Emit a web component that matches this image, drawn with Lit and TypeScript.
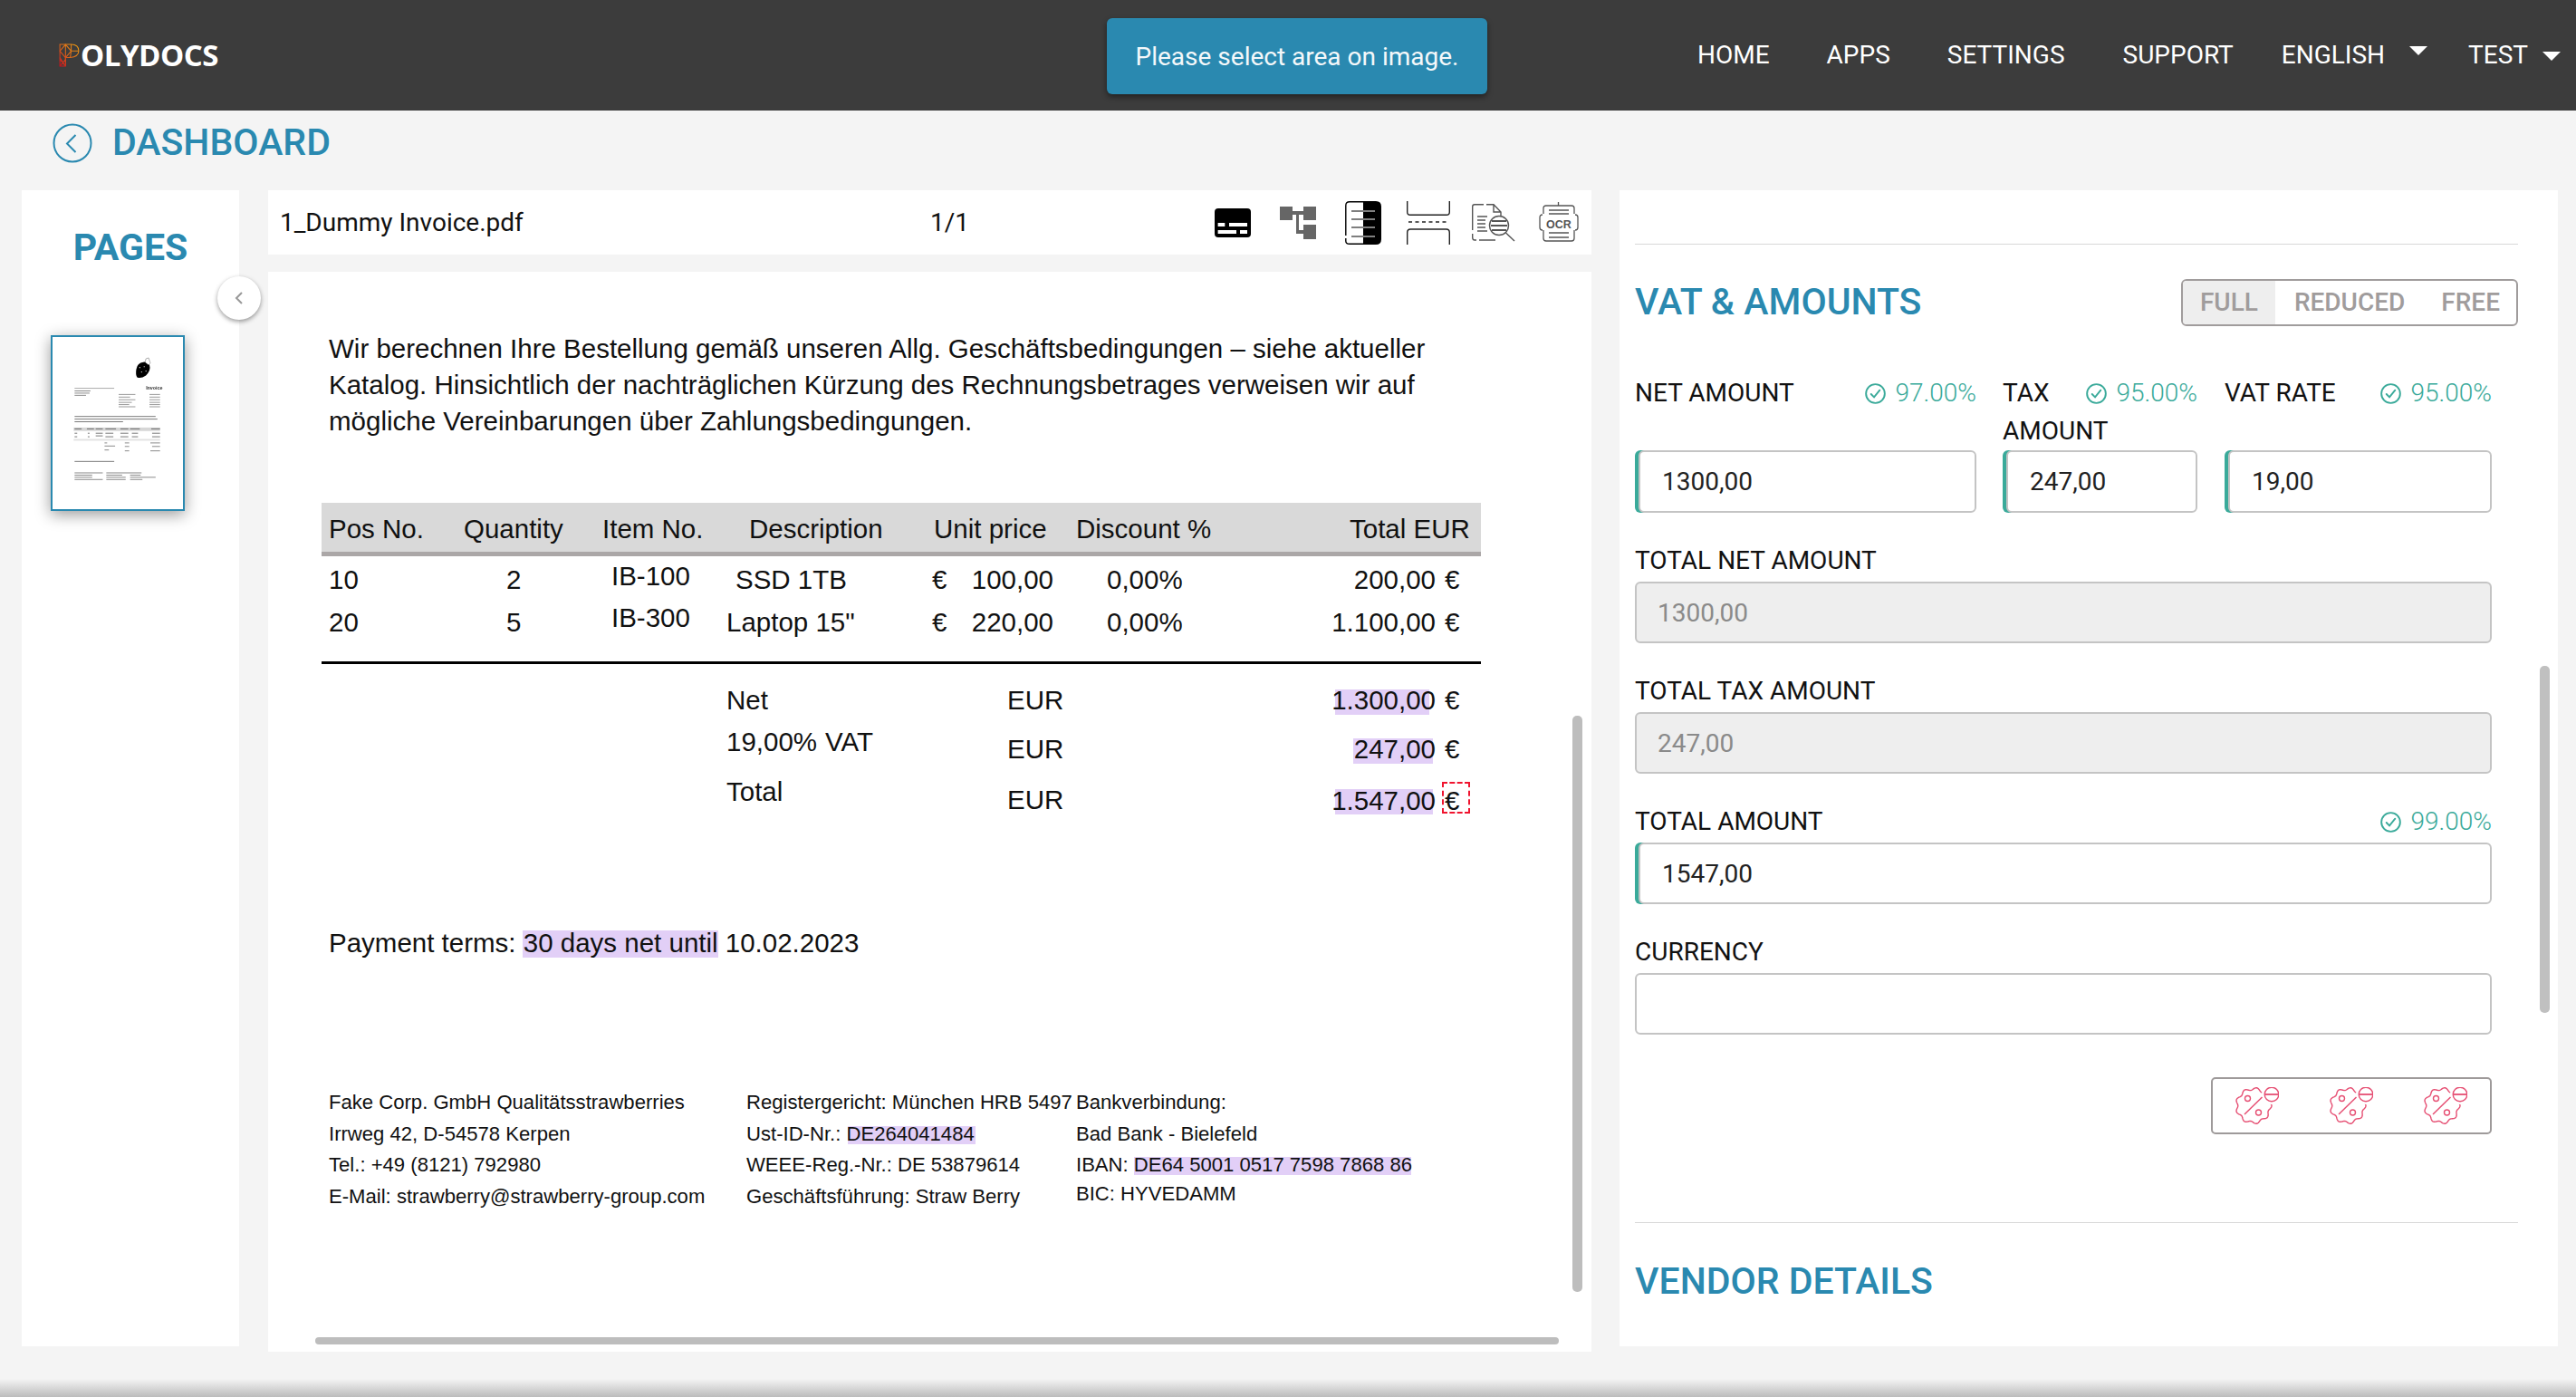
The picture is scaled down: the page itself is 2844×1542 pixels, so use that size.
import { LitElement, css, html, svg, type TemplateResult } from 'lit';
import { customElement } from 'lit/decorators.js';

// text layer of the rendered pdf page, screen coords (y = centre of the line)
interface PdfText { t: string; x?: number; r?: number; y: number; fs?: number; }

const ORIGIN_X = 296;
const ORIGIN_Y = 300;
const DOC_W = 1461;
const SMALL = 22.1;
const AMOUNT_R = 1585;
const EURO_X = 1595;

const PDF_TEXT: PdfText[] = [
  { t: 'Wir berechnen Ihre Bestellung gemäß unseren Allg. Geschäftsbedingungen – siehe aktueller', x: 363, y: 385 },
  { t: 'Katalog. Hinsichtlich der nachträglichen Kürzung des Rechnungsbetrages verweisen wir auf', x: 363, y: 425 },
  { t: 'mögliche Vereinbarungen über Zahlungsbedingungen.', x: 363, y: 465 },
  { t: 'Pos No.', x: 363, y: 584 },
  { t: 'Quantity', x: 512, y: 584 },
  { t: 'Item No.', x: 665, y: 584 },
  { t: 'Description', x: 827, y: 584 },
  { t: 'Unit price', x: 1031, y: 584 },
  { t: 'Discount %', x: 1188, y: 584 },
  { t: 'Total EUR', x: 1490, y: 584 },
  { t: '10', x: 363, y: 640 },
  { t: '2', x: 559, y: 640 },
  { t: 'IB-100', x: 675, y: 636 },
  { t: 'SSD 1TB', x: 812, y: 640 },
  { t: '€', x: 1029, y: 640 },
  { t: '100,00', r: 1163, y: 640 },
  { t: '0,00%', x: 1222, y: 640 },
  { t: '200,00', r: AMOUNT_R, y: 640 },
  { t: '€', x: EURO_X, y: 640 },
  { t: '20', x: 363, y: 687 },
  { t: '5', x: 559, y: 687 },
  { t: 'IB-300', x: 675, y: 682 },
  { t: 'Laptop 15"', x: 802, y: 687 },
  { t: '€', x: 1029, y: 687 },
  { t: '220,00', r: 1163, y: 687 },
  { t: '0,00%', x: 1222, y: 687 },
  { t: '1.100,00', r: AMOUNT_R, y: 687 },
  { t: '€', x: EURO_X, y: 687 },
  { t: 'Net', x: 802, y: 773 },
  { t: 'EUR', x: 1112, y: 773 },
  { t: '1.300,00', r: AMOUNT_R, y: 773 },
  { t: '€', x: EURO_X, y: 773 },
  { t: '19,00%', x: 802, y: 819 },
  { t: 'VAT', x: 911, y: 819 },
  { t: 'EUR', x: 1112, y: 827 },
  { t: '247,00', r: AMOUNT_R, y: 827 },
  { t: '€', x: EURO_X, y: 827 },
  { t: 'Total', x: 802, y: 874 },
  { t: 'EUR', x: 1112, y: 883 },
  { t: '1.547,00', r: AMOUNT_R, y: 884 },
  { t: '€', x: EURO_X, y: 884 },
  { t: 'Payment terms: 30 days net until 10.02.2023', x: 363, y: 1041 },
  { t: 'Fake Corp. GmbH Qualitätsstrawberries', x: 363, y: 1217, fs: SMALL },
  { t: 'Irrweg 42, D-54578 Kerpen', x: 363, y: 1252, fs: SMALL },
  { t: 'Tel.: +49 (8121) 792980', x: 363, y: 1286, fs: SMALL },
  { t: 'E-Mail: strawberry@strawberry-group.com', x: 363, y: 1321, fs: SMALL },
  { t: 'Registergericht: München HRB 5497', x: 824, y: 1217, fs: SMALL },
  { t: 'Ust-ID-Nr.: DE264041484', x: 824, y: 1252, fs: SMALL },
  { t: 'WEEE-Reg.-Nr.: DE 53879614', x: 824, y: 1286, fs: SMALL },
  { t: 'Geschäftsführung: Straw Berry', x: 824, y: 1321, fs: SMALL },
  { t: 'Bankverbindung:', x: 1188, y: 1217, fs: SMALL },
  { t: 'Bad Bank - Bielefeld', x: 1188, y: 1252, fs: SMALL },
  { t: 'IBAN: DE64 5001 0517 7598 7868 86', x: 1188, y: 1286, fs: SMALL },
  { t: 'BIC: HYVEDAMM', x: 1188, y: 1318, fs: SMALL },
];

// [x1, y1, x2, y2]
const HIGHLIGHTS = [
  [1474, 761, 1578, 789],
  [1494, 815, 1582, 843],
  [1474, 871, 1582, 899],
  [577, 1027, 793, 1057],
  [936, 1243, 1077, 1263],
  [1252, 1277, 1558, 1297],
];

// thumbnail: x, y, w, shade
const THUMB_LINES: [number, number, number, string][] = [
  [25, 57, 45, '#aaa'], [25, 60, 18, '#888'], [25, 62.5, 17, '#888'], [25, 65, 13, '#888'],
  [75, 64, 19, '#999'], [75, 67, 13, '#999'], [75, 70, 19, '#999'], [75, 73, 15, '#999'], [75, 75.5, 12, '#999'], [75, 78, 19, '#999'],
  [110, 64, 12, '#999'], [110, 67, 12, '#999'], [110, 70, 12, '#999'], [110, 73, 12, '#999'], [110, 75.5, 12, '#999'], [110, 78, 12, '#999'],
  [25, 89, 92, '#777'], [25, 92, 94, '#777'], [25, 95, 55, '#777'],
  [25, 103, 8, '#666'], [39, 103, 8, '#666'], [49, 103, 8, '#666'], [60, 103, 12, '#666'], [77, 103, 9, '#666'], [88, 103, 11, '#666'], [112, 103, 10, '#666'],
  [25, 108, 3, '#777'], [40, 108, 2, '#777'], [49, 108, 8, '#777'], [60, 108, 9, '#777'], [77, 108, 9, '#777'], [90, 108, 7, '#777'], [113, 108, 9, '#777'],
  [25, 112, 3, '#777'], [40, 112, 2, '#777'], [49, 111, 8, '#777'], [60, 112, 9, '#777'], [77, 112, 9, '#777'], [90, 112, 7, '#777'], [113, 112, 9, '#777'],
  [59, 119, 3, '#888'], [82, 119, 5, '#888'], [111, 119, 11, '#888'],
  [59, 122.5, 12, '#888'], [82, 123, 5, '#888'], [113, 123, 9, '#888'],
  [59, 127, 5, '#888'], [82, 128, 5, '#888'], [111, 128, 11, '#888'],
  [25, 140, 45, '#777'],
  [25, 153, 32, '#888'], [25, 155.5, 20, '#888'], [25, 158, 20, '#888'], [25, 160.5, 32, '#888'],
  [61, 153, 40, '#888'], [61, 155.5, 18, '#888'], [61, 158, 22, '#888'], [61, 160.5, 22, '#888'],
  [88, 155.5, 12, '#888'], [88, 158, 29, '#888'], [88, 160.5, 14, '#888'],
];

// scalloped seal behind the percent sign
const sealPath = (cx: number, cy: number, r: number, lobes: number, amp: number): string => {
  const pts: string[] = [];
  for (let i = 0; i < 180; i++) {
    const a = (i / 180) * Math.PI * 2;
    const rr = r + amp * Math.cos(a * lobes);
    pts.push(`${(cx + rr * Math.cos(a)).toFixed(2)} ${(cy + rr * Math.sin(a)).toFixed(2)}`);
  }
  return `M${pts.join('L')}Z`;
};

const percentIcon = (): TemplateResult => html`
  <svg class="pct" viewBox="0 0 48 41" fill="none" stroke="#e64f73" stroke-width="1.4">
    <path d=${sealPath(20, 20.5, 18.6, 9, 1.4)}></path>
    <circle cx="40" cy="8" r="11" fill="#fff" stroke="none"></circle>
    <circle cx="40" cy="8" r="7.8"></circle>
    <path d="M33 8H47" stroke-width="1.8"></path>
    <path d="M10 30L29.500 11" stroke-width="1.5"></path>
    <circle cx="13.500" cy="12.500" r="3"></circle>
    <circle cx="25.500" cy="28" r="3"></circle>
  </svg>
`;

const checkIcon = (): TemplateResult => html`
  <svg class="chk" viewBox="0 0 24 24" fill="none" stroke="#3aaa9a" stroke-width="2">
    <circle cx="12" cy="12" r="10.800"></circle>
    <path d="M7 12.500l3.500 3.500 6.500-8" stroke-linecap="round"></path>
  </svg>
`;

@customElement('app-root')
export class AppRoot extends LitElement {
  private renderPdfText(p: PdfText): TemplateResult {
    const side = p.r !== undefined
      ? `right:${ORIGIN_X + DOC_W - p.r}px`
      : `left:${(p.x ?? 0) - ORIGIN_X}px`;
    const size = p.fs ? `font-size:${p.fs}px;` : '';
    return html`<span class="pt" style="${size}${side};top:${p.y - ORIGIN_Y}px">${p.t}</span>`;
  }

  private renderConfidence(v: string): TemplateResult {
    return html`<span class="conf">${checkIcon()}${v}</span>`;
  }

  private renderToolbarIcons(): TemplateResult {
    return html`
      <svg class="i1" viewBox="0 0 40 32">
        <rect width="40" height="32" rx="4"></rect>
        <g fill="#fff">
          <rect x="3.600" y="16" width="7.700" height="4"></rect><rect x="16" y="16" width="20" height="4"></rect>
          <rect x="3.600" y="24" width="20.400" height="4"></rect><rect x="28" y="24" width="8" height="4"></rect>
        </g>
      </svg>
      <svg class="i2" viewBox="0 0 40 36" fill="#666">
        <rect width="14" height="15"></rect><rect x="26" width="14" height="15"></rect><rect x="26" y="20" width="14" height="16"></rect>
        <path d="M14 5h12v4h-5v17h5v4h-8V9h-4z"></path>
      </svg>
      <svg class="i3" viewBox="0 0 40 48">
        <path d="M20 .7H5Q.800 .700 .800 5V38M.800 41V44Q.800 47.300 5 47.300H20" fill="none" stroke="#000" stroke-width="1.400"></path>
        <path d="M20 0H34Q40 0 40 6V42Q40 48 34 48H20z"></path>
        <path d="M7 11H20M7 20H20M7 29H20M7 39H20" stroke="#000" stroke-width="1.200"></path>
        <path d="M20 11H33M20 20H33M20 29H33M20 39H33" stroke="#fff" stroke-width="1.200"></path>
      </svg>
      <svg class="i4" viewBox="0 0 48 48" fill="none" stroke="#222" stroke-width="1.400">
        <path d="M.700 0V12Q.700 15.300 4 15.300H44Q47.300 15.300 47.300 12V0"></path>
        <path d="M2 23H46" stroke-dasharray="4 3.500"></path>
        <path d="M.700 48V35Q.700 31 4 31H44Q47.300 31 47.300 35V48"></path>
      </svg>
      <svg class="i5" viewBox="0 0 48 42" fill="none" stroke="#555" stroke-width="1.400">
        <path d="M0.700 29V3Q.700 .700 3 .700H13M16 .700H24L32 9V13M24 .700V9H32M26 40H8M5 40H3Q.700 40 .700 37V33"></path>
        <path d="M6 14H17M6 18H15M6 22H15M6 26H15M6 30H17"></path>
        <circle cx="30" cy="24" r="10.500"></circle>
        <path d="M22 19H38M21 24H39M22 29H38" stroke-width="2.200"></path>
        <path d="M37.500 32L47 41"></path>
      </svg>
      <svg class="i6" viewBox="0 0 44 46" fill="none" stroke="#555" stroke-width="1.300">
        <path d="M5 13V7Q5 4 8 4H36Q39 4 39 7V13M5 31V40Q5 43 8 43H36Q39 43 39 40V31"></path>
        <path d="M21.500 0V4M11 9H33M11 13H33M11 34H33M11 39H33"></path>
        <path d="M4 14Q1 14 1 17V28Q1 31 4 31M40 14Q43 14 43 17V28Q43 31 40 31"></path>
        <text x="22" y="29" text-anchor="middle" class="ocr">OCR</text>
      </svg>
    `;
  }

  private renderThumb(): TemplateResult {
    return html`
      <svg class="thumb" viewBox="0 0 148 194">
        <g class="ink">
          <rect x="24" y="102" width="98" height="4" fill="#d6d6d6"></rect>
          <rect x="24" y="115" width="98" height="2" fill="#e2e2e2"></rect>
          <path d="M95 36Q96 29 103 28Q109 26 110 31Q112 37 106 43Q100 47 96 45Q94 42 95 36z" fill="#000"></path>
          <path d="M105 28l1 -4 3 -1 2 6-2 2" fill="#fff" stroke="#777" stroke-width=".6"></path>
          <g fill="#fff"><circle cx="99" cy="34" r=".6"></circle><circle cx="104" cy="33" r=".6"></circle><circle cx="101" cy="39" r=".6"></circle><circle cx="106" cy="38" r=".6"></circle></g>
          ${THUMB_LINES.map(([x, y, w, c]) => svg`<rect x=${x} y=${y} width=${w} height="1" fill=${c}></rect>`)}
          <text x="106" y="59" class="th-title">Invoice</text>
        </g>
      </svg>
    `;
  }

  override render(): TemplateResult {
    return html`
      <header class="top">
        <div class="logo">
          <svg viewBox="0 0 22 25" fill="none" stroke="url(#pmesh)" stroke-width="1">
            <defs>
              <linearGradient id="pmesh" x1="1" y1="0" x2="0" y2="1">
                <stop offset="0" stop-color="#f0a010"></stop>
                <stop offset=".55" stop-color="#d9621a"></stop>
                <stop offset="1" stop-color="#c80f1e"></stop>
              </linearGradient>
            </defs>
            <path d="M1 1H13Q21 1 21 8Q21 14 12 15H7V24H1z"></path>
            <path d="M1 8L7 1L13 8L7 15L1 8M13 8H21M7 1V24M1 15L7 24M1 17L7 24M1 24L7 17M13 1V8L12 15M13 8L21 8"></path>
          </svg>
          <span>OLYDOCS</span>
        </div>
        <nav class="nav">
          <a>HOME</a>
          <a class="g65">APPS</a>
          <a class="g65">SETTINGS</a>
          <a class="g64">SUPPORT</a>
          <a class="g54">ENGLISH</a><i class="caret up"></i>
          <a class="g45">TEST</a><i class="caret"></i>
        </nav>
      </header>
      <div class="toast">Please select area on image.</div>

      <div class="crumb">
        <svg viewBox="0 0 44 44" fill="none" stroke="#2a89b0" stroke-width="2">
          <circle cx="22" cy="22" r="20.500"></circle>
          <path d="M25.500 13L16 22.500L25.500 32"></path>
        </svg>
        <span>DASHBOARD</span>
      </div>

      <main class="body">
        <aside class="pages">
          <h2>PAGES</h2>
          ${this.renderThumb()}
          <button class="collapse">
            <svg viewBox="0 0 12 16" fill="none" stroke="#999" stroke-width="2"><path d="M9 2L3 8L9 14"></path></svg>
          </button>
        </aside>

        <section class="viewer">
          <div class="toolbar">
            <span class="fname">1_Dummy Invoice.pdf</span>
            <span class="count">1/1</span>
            ${this.renderToolbarIcons()}
          </div>
          <div class="doc">
            <div class="rule head"></div>
            <div class="rule headline"></div>
            <div class="rule black"></div>
            ${HIGHLIGHTS.map(([a, b, c, d]) => html`
              <div class="hl" style="left:${a - ORIGIN_X}px;top:${b - ORIGIN_Y}px;width:${c - a}px;height:${d - b}px"></div>
            `)}
            ${PDF_TEXT.map((p) => this.renderPdfText(p))}
            <div class="selection"></div>
            <div class="sb-v"></div>
            <div class="sb-h"></div>
          </div>
        </section>

        <section class="form">
          <hr class="first" />
          <div class="form-head">
            <h2>VAT &amp; AMOUNTS</h2>
            <div class="seg"><span class="on">FULL</span><span>REDUCED</span><span>FREE</span></div>
          </div>
          <div class="triple">
            <div class="f net">
              <div class="lab">${this.renderConfidence('97.00%')}NET AMOUNT</div>
              <input class="ok" .value=${'1300,00'} />
            </div>
            <div class="f tax">
              <div class="lab">${this.renderConfidence('95.00%')}TAX AMOUNT</div>
              <input class="ok" .value=${'247,00'} />
            </div>
            <div class="f vat">
              <div class="lab">${this.renderConfidence('95.00%')}VAT RATE</div>
              <input class="ok" .value=${'19,00'} />
            </div>
          </div>
          <div class="f wide"><div class="lab one">TOTAL NET AMOUNT</div><input disabled .value=${'1300,00'} /></div>
          <div class="f wide"><div class="lab one">TOTAL TAX AMOUNT</div><input disabled .value=${'247,00'} /></div>
          <div class="f wide">
            <div class="lab one">${this.renderConfidence('99.00%')}TOTAL AMOUNT</div>
            <input class="ok" .value=${'1547,00'} />
          </div>
          <div class="f wide"><div class="lab one">CURRENCY</div><input /></div>
          <div class="pct-row"><div class="pct-box">${percentIcon()}${percentIcon()}${percentIcon()}</div></div>
          <hr class="second" />
          <h2 class="vendor">VENDOR DETAILS</h2>
          <div class="sb-form"></div>
        </section>
      </main>
      <div class="shade"></div>
    `;
  }

  static override styles = css`
    :host {
      display: flex;
      flex-direction: column;
      position: relative;
      width: 2844px;
      height: 1542px;
      overflow: hidden;
      background: #f4f4f4;
      font-family: Roboto, 'Liberation Sans', sans-serif;
      font-size: 28px;
      color: #111;
    }
    h2 { margin: 0; font-size: 41px; line-height: 48px; font-weight: 500; color: #2a89b0; }

    .top {
      flex: none;
      height: 122px;
      background: #3c3c3c;
      display: flex;
      align-items: center;
      justify-content: space-between;
      padding: 0 17px 0 65px;
    }
    .logo { display: flex; align-items: center; gap: 1px; margin-top: -1px; }
    .logo svg { width: 23px; height: 26px; }
    .logo span { font-family: 'Open Sans', sans-serif; font-size: 33px; font-weight: 700; color: #fff; letter-spacing: -0.5px; }
    .nav { display: flex; align-items: center; color: #fff; }
    .nav a { line-height: 40px; }
    .g65 { margin-left: 63px; }
    .g64 { margin-left: 64px; }
    .g54 { margin-left: 53px; }
    .g45 { margin-left: 45px; }
    .caret {
      width: 0;
      height: 0;
      margin: 2px 0 0 16px;
      border-left: 10px solid transparent;
      border-right: 10px solid transparent;
      border-top: 10px solid #fff;
    }
    .caret.up { margin: -10px 0 0 27px; }

    .toast {
      position: absolute;
      left: 1222px;
      top: 20px;
      width: 420px;
      height: 84px;
      box-sizing: border-box;
      display: flex;
      align-items: center;
      justify-content: center;
      border-radius: 6px;
      background: #2a89b0;
      color: #f4f8fa;
      box-shadow: 0 3px 6px rgba(0, 0, 0, 0.45);
    }

    .crumb {
      flex: none;
      height: 74px;
      padding: 14px 0 0 58px;
      display: flex;
      align-items: flex-start;
      gap: 22px;
      color: #2a89b0;
      font-size: 41px;
      font-weight: 500;
      line-height: 43px;
    }
    .crumb svg { width: 44px; height: 44px; }

    .body { flex: none; display: flex; align-items: flex-start; padding-left: 24px; height: 1282px; }

    .pages {
      position: relative;
      z-index: 2;
      flex: none;
      width: 240px;
      height: 1276px;
      background: #fff;
      text-align: center;
    }
    .pages h2 { padding-top: 39px; font-weight: 700; }
    .thumb {
      position: absolute;
      left: 32px;
      top: 160px;
      width: 148px;
      height: 194px;
      box-sizing: border-box;
      border: 2px solid #2a89b0;
      background: #fff;
      box-shadow: 0 4px 16px rgba(0, 0, 0, 0.4);
    }
    .ink { filter: blur(0.3px); }
    .th-title { font: 700 5.500px 'Liberation Sans', sans-serif; fill: #333; }
    .collapse {
      position: absolute;
      left: 216px;
      top: 95px;
      width: 48px;
      height: 48px;
      padding: 0;
      border: 0;
      border-radius: 50%;
      background: #fff;
      box-shadow: 0 2px 5px rgba(0, 0, 0, 0.4);
      display: flex;
      align-items: center;
      justify-content: center;
    }
    .collapse svg { width: 12px; height: 16px; }

    .viewer { flex: none; width: 1461px; margin-left: 32px; }
    .toolbar {
      height: 71px;
      background: #fff;
      display: flex;
      align-items: center;
      padding-left: 13px;
    }
    .fname { width: 718px; }
    .count { width: 314px; }
    .i1 { width: 40px; height: 32px; }
    .i2 { width: 40px; height: 36px; margin-left: 32px; }
    .i3 { width: 40px; height: 48px; margin-left: 32px; }
    .i4 { width: 48px; height: 48px; margin-left: 28px; }
    .i5 { width: 48px; height: 42px; margin-left: 24px; }
    .i6 { width: 44px; height: 46px; margin-left: 26px; }
    .ocr { font: 700 12.500px 'Liberation Sans', sans-serif; fill: #555; stroke: none; }

    .doc {
      position: relative;
      height: 1192px;
      margin-top: 19px;
      background: #fff;
      overflow: hidden;
      font-family: 'Liberation Sans', sans-serif;
      color: #111;
    }
    .pt { position: absolute; transform: translateY(-50%); white-space: pre; line-height: 1.2; font-size: 29.5px; }
    .hl { position: absolute; background: #e2cff7; }
    .rule { position: absolute; left: 59px; width: 1280px; }
    .head { top: 255px; height: 54px; background: #d9d9d9; }
    .headline { top: 309px; height: 5px; background: #aba7a7; }
    .black { top: 430px; height: 3px; background: #000; }
    .selection {
      position: absolute;
      left: 1296px;
      top: 563px;
      width: 31px;
      height: 35px;
      box-sizing: border-box;
      border: 2px dashed #f0142f;
    }
    .sb-v { position: absolute; left: 1440px; top: 490px; width: 11px; height: 636px; border-radius: 5px; background: #bdbdbd; }
    .sb-h { position: absolute; left: 52px; top: 1176px; width: 1373px; height: 8px; border-radius: 4px; background: #bdbdbd; }

    .form {
      position: relative;
      flex: none;
      box-sizing: border-box;
      width: 1036px;
      height: 1276px;
      margin-left: 31px;
      padding: 59px 44px 0 17px;
      background: #fff;
      overflow: hidden;
    }
    hr { margin: 0; border: 0; height: 1px; background: #d8d8d8; }
    .form-head {
      margin-top: 38px;
      height: 52px;
      display: flex;
      align-items: center;
      justify-content: space-between;
    }
    .form-head h2 { margin-top: -2px; }
    .seg {
      display: flex;
      height: 52px;
      box-sizing: border-box;
      overflow: hidden;
      border: 2px solid #a09c9c;
      border-radius: 6px;
      color: #a09c9c;
      font-weight: 500;
      line-height: 48px;
    }
    .seg span { padding: 0 19px; }
    .seg span.on { background: #eee; }
    .seg span:nth-child(2) { padding: 0 21px 0 21px; }
    .seg span:nth-child(3) { padding: 0 18px 0 19px; }

    .triple { display: flex; margin-top: 53px; width: 946px; }
    .f { flex: none; display: flex; flex-direction: column; }
    .net { width: 377px; }
    .tax { width: 215px; margin-left: 29px; }
    .vat { width: 295px; margin-left: 30px; }
    .wide { width: 946px; margin-top: 32px; }
    .lab { height: 84px; line-height: 42px; }
    .lab.one { height: 42px; }
    .conf {
      float: right;
      display: flex;
      align-items: center;
      gap: 10px;
      font-weight: 300;
      color: #3aaa9a;
    }
    .chk { width: 23px; height: 23px; }
    input {
      display: block;
      box-sizing: border-box;
      width: 100%;
      height: 68px;
      border: 2px solid #c4c4c4;
      border-radius: 6px;
      padding: 0 0 0 21px;
      margin-top: 2px;
      background: #fff;
      color: #222;
      font: inherit;
      outline: 0;
    }
    .triple input { margin-top: 0; height: 69px; }
    input.ok { width: calc(100% - 4px); margin-left: 4px; box-shadow: -4px 0 0 0 #3aaa9a; padding-left: 24px; }
    input:disabled { background: #eeeeee; color: #8a8a8a; padding-left: 23px; }
    .pct-row { display: flex; justify-content: flex-end; width: 946px; margin-top: 47px; }
    .pct-box {
      box-sizing: border-box;
      width: 310px;
      height: 63px;
      border: 2px solid #9e9a9a;
      border-radius: 5px;
      display: flex;
      align-items: center;
      padding-left: 25px;
      gap: 56px;
    }
    .pct { width: 48px; height: 41px; flex: none; }
    .second { margin-top: 97px; }
    .vendor { margin-top: 40px; }
    .sb-form { position: absolute; left: 1016px; top: 525px; width: 11px; height: 383px; border-radius: 5px; background: #c0c0c0; }

    .shade {
      flex: none;
      margin-top: auto;
      height: 20px;
      background: linear-gradient(#f4f4f4, #bcbcbc);
    }
  `;
}

declare global {
  interface HTMLElementTagNameMap {
    'app-root': AppRoot;
  }
}
